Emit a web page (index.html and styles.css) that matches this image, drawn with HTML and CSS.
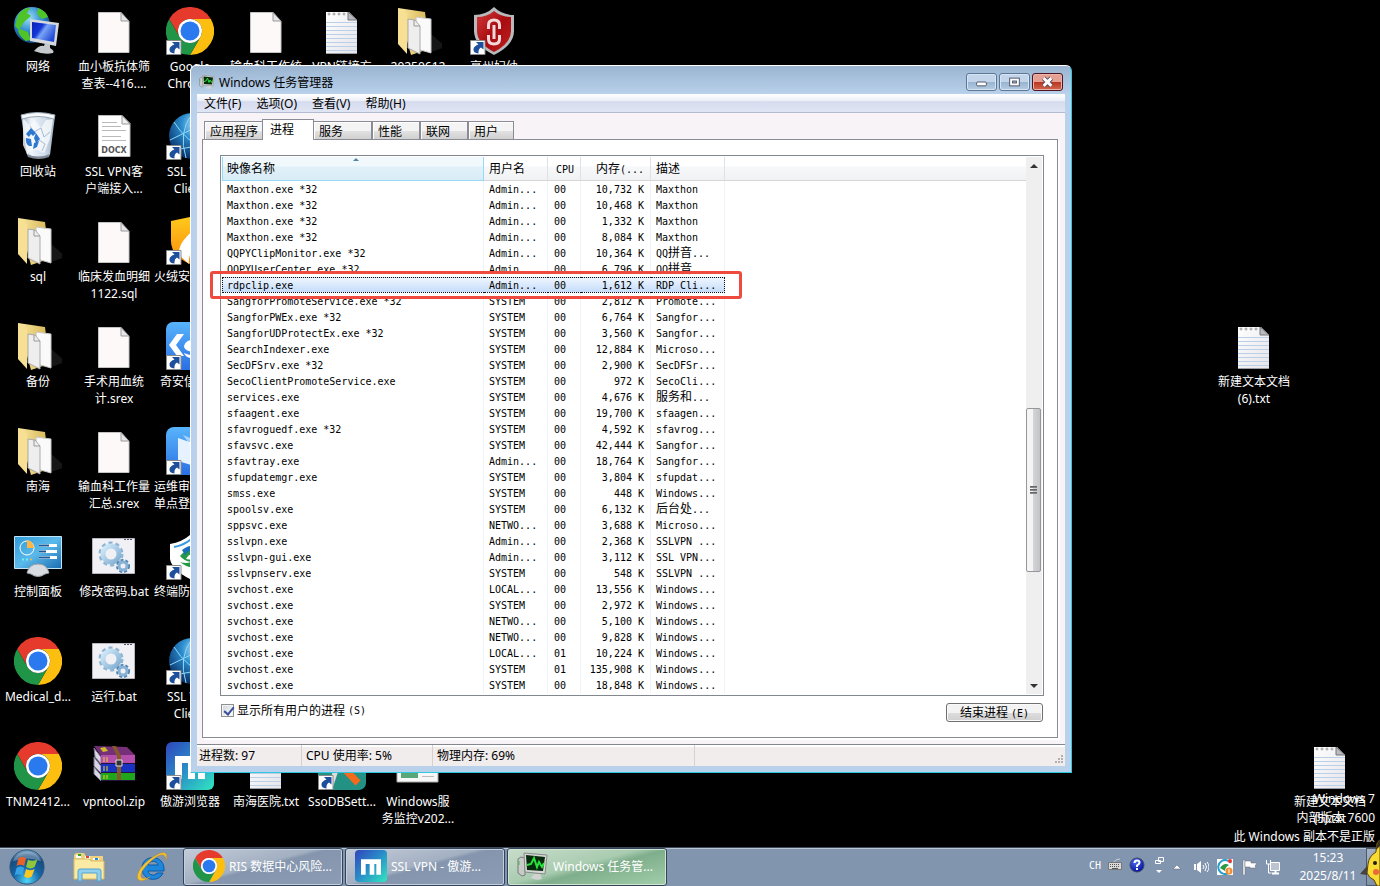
FILE: index.html
```html
<!DOCTYPE html>
<html lang="zh-CN">
<head>
<meta charset="utf-8">
<title>Windows 任务管理器</title>
<link rel="stylesheet" href="styles.css">
</head>
<body>
<svg class="defs" width="0" height="0" aria-hidden="true">
  <defs>
    <linearGradient id="gFolder" x1="0" x2="1"><stop offset="0" stop-color="#fbe9a0"/><stop offset="1" stop-color="#d9b95c"/></linearGradient>
    <linearGradient id="gPage" x1="0" y1="0" x2="1" y2="1"><stop offset="0" stop-color="#fff"/><stop offset="1" stop-color="#e4e4ea"/></linearGradient>
    <radialGradient id="gGlobe" cx=".4" cy=".3" r=".8"><stop offset="0" stop-color="#9be0fb"/><stop offset=".5" stop-color="#2b86c9"/><stop offset="1" stop-color="#062a66"/></radialGradient>
    <radialGradient id="gWorld" cx=".6" cy=".25" r=".8"><stop offset="0" stop-color="#c9ecfb"/><stop offset=".4" stop-color="#2c8ed0"/><stop offset="1" stop-color="#04265c"/></radialGradient>
    <linearGradient id="gScreen" x1="0" y1="0" x2="1" y2=".6"><stop offset="0" stop-color="#0a1fb4"/><stop offset=".4" stop-color="#1437d8"/><stop offset=".55" stop-color="#7aa4f5"/><stop offset="1" stop-color="#2049d6"/></linearGradient>
    <linearGradient id="gBin" x1="0" x2="1"><stop offset="0" stop-color="#9aabbd"/><stop offset=".3" stop-color="#eef4fa"/><stop offset=".7" stop-color="#cfdcea"/><stop offset="1" stop-color="#9dadbf"/></linearGradient>
    <linearGradient id="gBlue" x1="0" y1="0" x2="0" y2="1"><stop offset="0" stop-color="#58b4fb"/><stop offset="1" stop-color="#2a6fe4"/></linearGradient>
    <linearGradient id="gPanel" x1="0" y1="0" x2="1" y2="1"><stop offset="0" stop-color="#2f9bd8"/><stop offset=".5" stop-color="#5bb9ea"/><stop offset="1" stop-color="#1b6db0"/></linearGradient>
    <linearGradient id="gMax" x1="0" y1="0" x2="1" y2="1"><stop offset="0" stop-color="#2f45bd"/><stop offset=".5" stop-color="#2a8fc8"/><stop offset="1" stop-color="#30e8c0"/></linearGradient>
    <linearGradient id="gRed" x1="0" y1="0" x2="1" y2="1"><stop offset="0" stop-color="#d43a3a"/><stop offset=".5" stop-color="#a80c10"/><stop offset="1" stop-color="#c02020"/></linearGradient>
    <linearGradient id="gGear" x1="0" y1="0" x2="1" y2="1"><stop offset="0" stop-color="#d4ecf9"/><stop offset="1" stop-color="#7fadd2"/></linearGradient>
    <linearGradient id="gHuo" x1="0" y1="0" x2="0" y2="1"><stop offset="0" stop-color="#ffc91c"/><stop offset="1" stop-color="#fb8a0c"/></linearGradient>
    <radialGradient id="gOrb" cx=".5" cy=".9" r=".9"><stop offset="0" stop-color="#4fd4f8"/><stop offset=".45" stop-color="#1565a5"/><stop offset=".8" stop-color="#164a7c"/><stop offset="1" stop-color="#7fa9cc"/></radialGradient>
    <radialGradient id="gHelp" cx=".4" cy=".3" r=".7"><stop offset="0" stop-color="#4a6cf0"/><stop offset="1" stop-color="#0410a0"/></radialGradient>
  </defs>
  <symbol id="lnk" viewBox="0 0 48 48"><path d="M.5 33.500h14.500v14H.5z" fill="#fff" stroke="#8a8a8a"/><path d="M6 35h7.500v7.500L11 40.500Q8 42 8.500 46.500 3 46 3.500 42 4 39 8.500 37.500Z" fill="#1d4f9c"/></symbol>
  <symbol id="chrome" viewBox="0 0 48 48"><path d="M24 12H44.800A24 24 0 0 0 3.200 12L13.600 30A12 12 0 0 1 24 12" fill="#e53a2c"/><path d="M44.800 12A24 24 0 0 1 24 48L34.400 30A12 12 0 0 0 24 12Z" fill="#fcbf10"/><path d="M3.200 12A24 24 0 0 0 24 48L34.400 30A12 12 0 0 1 13.600 30Z" fill="#219547"/><circle cx="24" cy="24" r="12" fill="#fff"/><circle cx="24" cy="24" r="9.500" fill="#2a79ee"/></symbol>
  <symbol id="page" viewBox="0 0 48 48"><path d="M8.500 5.500H31l8 9V45.500H8.500Z" fill="#fdf9f9" stroke="#c4c4c4"/><path d="M31 5.500V14h8Z" fill="#e6e6ea" stroke="#9a9a9a"/></symbol>
  <symbol id="note" viewBox="0 0 48 48"><path d="M8 5h23l8 8v34H8Z" fill="url(#gPage)"/><path d="M8 46.500h31" stroke="#9c9ca4"/><path d="M8 15.500h31M8 19.500h31M8 23.500h31M8 27.500h31M8 31.500h31M8 35.500h31M8 39.500h31M8 43.500h31" stroke="#bccfe8"/><path d="M30 5v8h9Z" fill="#b8bac2" stroke="#777"/><g fill="#fff" stroke="#999"><circle cx="11" cy="7" r="1"/><circle cx="16" cy="7" r="1"/><circle cx="21" cy="7" r="1"/><circle cx="26" cy="7" r="1"/></g></symbol>
  <symbol id="folder" viewBox="0 0 48 48"><path d="M36 26l16 14-15 5Z" fill="#161616"/><path d="M4 1l27 4 1 8v30l-15 5Z" fill="url(#gFolder)"/><path d="M22 10l15 2v34l-14-4Z" fill="#fafafa" stroke="#c6c6c6"/><path d="M14 12l7 1 5 6v28l-12-6Z" fill="#eee" stroke="#aaa"/><path d="M20 13v6h6" fill="none" stroke="#999"/><path d="M4 1l9 6v40L4 37Z" fill="#f7e093"/></symbol>
  <symbol id="network" viewBox="0 0 48 48"><circle cx="18" cy="18" r="18" fill="url(#gGlobe)"/><path d="M4 8q6-8 12-7l-3 5 4 3-7 6-5 8-4-4ZM24 1q8 3 10 9l-6 2-5-5ZM6 22l8 3 3 8-5 1q-6-4-8-10Z" fill="#4fc428"/><path d="M16 12l29 4-3 23-26-5Z" fill="#d5d9df"/><path d="M18 15l24 3-2 17-22-4Z" fill="url(#gScreen)"/><path d="M20 44q5-6 10-5l1-3 5 1v4q5 3 3 5-9 2-19-2Z" fill="#c5c9ce"/></symbol>
  <symbol id="bin" viewBox="0 0 48 48"><path d="M7 4h34l-5 39q-11 5-23 0Z" fill="url(#gBin)"/><path d="M9 6l7 8 4-7 7 9 5-8 7-1-3 20-6 14-9-4-8 5-4-9Z" fill="#f7fafd" opacity=".8"/><path d="M16 14l4 6 7-4 3 9 6-5M25 28l6 4-3 7" fill="none" stroke="#a9bbcf"/><path d="M7 3q16-5 34 0l-1 4q-16-5-32 0Z" fill="#f7fafc" stroke="#9ba7b3"/><path d="M12 22l5-6 5 5-3 3-2-2-2 3ZM22 21l4 6-4 4-2-5ZM12 26l5 1 1 7h-3q-4-3-3-8ZM20 31l5-2-2 6-4 2Z" fill="#2f78cf"/><path d="M13 42q11 5 23 0l-1 3q-10 4-21 0Z" fill="#7f8a96"/></symbol>
  <symbol id="globe" viewBox="0 0 48 48"><circle cx="26" cy="24" r="23" fill="url(#gWorld)"/><path d="M4 28Q22 20 42 8M8 10Q20 30 42 38M26 2Q12 20 20 46M26 2Q44 20 32 46M6 36Q24 40 46 24" fill="none" stroke="#8fd9f8"/></symbol>
  <symbol id="huorong" viewBox="0 0 48 48"><path d="M5 4L24 0l19 4v20q0 15-19 23Q5 39 5 24Z" fill="url(#gHuo)"/><path d="M34 4C28 16 12 22 13 38l10 9c-2-16 16-22 11-43Z" fill="#fff"/></symbol>
  <symbol id="qax" viewBox="0 0 48 48"><rect width="48" height="48" rx="7" fill="url(#gBlue)"/><path d="M18 12h-7L3 23l8 11h7l-8-11ZM38 18q-18-3-20 6c0 6 10 5 13 8-3 3-10 0-13-1 3 9 22 6 21-1-1-6-12-5-14-8 3-3 9-1 12 0Z" fill="#fff"/></symbol>
  <symbol id="ops" viewBox="0 0 48 48"><rect width="48" height="48" rx="8" fill="url(#gBlue)"/><path d="M12 11l23 8v22L12 34Z" fill="#e6f2ff"/><path d="M17 8l20 8v20" fill="#fff" opacity=".5"/></symbol>
  <symbol id="edr" viewBox="0 0 48 48"><path d="M4 12q12-2 20-9 8 7 20 9v15q0 12-20 20Q6 38 4 27Z" fill="#fff"/><path d="M8 15q10-2 16-7 6 5 16 7" fill="none" stroke="#3d9be0" stroke-width="2"/><path d="M14 24q10-12 24-5-13-1-18 8 10 2 18 0-9 15-24 3 6 2 11 0-7-1-11-6Z" fill="#239847"/><path d="M16 18q9-7 20-3-12 1-17 8Z" fill="#1c6dba"/></symbol>
  <symbol id="control" viewBox="0 0 48 48"><path d="M.5 4.500h47v32H.5Z" fill="url(#gPanel)" stroke="#bfe4f7"/><circle cx="13" cy="16" r="7" fill="none" stroke="#fff"/><path d="M13 16V8a8 8 0 0 1 7 8Z" fill="#ffb545"/><path d="M25 13.500h18M25 19.500h18M25 25.500h18" stroke="#fff" stroke-width="3"/><path d="M25 13.500h10M25 19.500h7M25 25.500h11" stroke="#165c9d" stroke-width="2"/><path d="M8 27.500h6" stroke="#6ef0f5" stroke-width="2" stroke-dasharray="2 2"/><circle cx="17" cy="27.500" r="1" fill="#fb3"/><path d="M13 41q2-9 11-9t11 9l-4 1q-7 5-14 0Z" fill="#d9dce0" stroke="#9aa1a8"/></symbol>
  <symbol id="bat" viewBox="0 0 48 48"><path d="M2.500 6.500h42v35h-42Z" fill="#f0f0f5" stroke="#b5b6be"/><path d="M34 7.500h9" stroke="#556" stroke-dasharray="2 1"/><circle cx="21" cy="22" r="11" fill="none" stroke="#8db6d6" stroke-width="3" stroke-dasharray="4 3"/><circle cx="21" cy="22" r="8" fill="none" stroke="url(#gGear)" stroke-width="5"/><circle cx="33" cy="34" r="6" fill="none" stroke="#4c7fae" stroke-width="2" stroke-dasharray="3 2"/><circle cx="33" cy="34" r="4" fill="none" stroke="#87b2d6" stroke-width="3"/></symbol>
  <symbol id="rar" viewBox="0 0 48 48"><path d="M4 6l7 9v7l-6-7ZM4 15l7 9v7l-7-7ZM4 25l7 8v6l-7-7Z" fill="#d9d4e4" stroke="#7b7390"/><path d="M4 4l33 1 8 8-34 1Z" fill="#753078"/><path d="M11 13h34v8H11Z" fill="#b44fae"/><path d="M11 22h34v8H11Z" fill="#1733c0"/><path d="M11 31h34v7H11Z" fill="#20a51d"/><path d="M11 21.500h34M11 30.500h34M11 38.500h34" stroke="#24133a"/><path d="M14 15v5M17 15v5M14 24v5M17 24v5M14 33v4M17 33v4" stroke="#ead52c"/><path d="M10 6l5-1 3 4-5 1Z" fill="#cdbb2a"/><path d="M22 4h4l5 10v24h-4V14Z" fill="#85592a"/><path d="M26 18h6v6h-6Z" fill="#333" stroke="#ddd"/></symbol>
  <symbol id="maxthon" viewBox="0 0 48 48"><rect width="48" height="48" rx="6" fill="url(#gMax)"/><path d="M9 37V14h30v23h-7V21h-3v16h-7V21h-6v16Z" fill="#fff"/></symbol>
  <symbol id="shield" viewBox="0 0 48 48"><path d="M4 8q12 0 20-8 8 8 20 8v16q0 14-20 24Q4 38 4 24Z" fill="#b7babd"/><path d="M7 10q10 0 17-6 7 6 17 6v14q0 12-17 21Q7 36 7 24Z" fill="url(#gRed)"/><path d="M19 23v-6q0-5 5-5t5 5v6M19 27v12q0 5 5 5" fill="none"/><path d="M18.500 22v-4q0-5 5.500-5t5.500 5v4M18.500 28v4q0 5 5.500 5t5.500-5v-4M24 18v14" fill="none" stroke="#f3dada" stroke-width="3"/></symbol>
  <symbol id="tools" viewBox="0 0 48 48"><rect width="48" height="48" rx="7" fill="#239184"/><path d="M22 16L12 46" stroke="#ddd" stroke-width="5"/><path d="M22 22l18 19" stroke="#f46a1b" stroke-width="7"/></symbol>
  <symbol id="service" viewBox="0 0 48 48"><path d="M3 8h41v32H3Z" fill="#f7f7f7" stroke="#aaa"/><path d="M7 12h17v24H7Z" fill="#57a777"/><path d="M28 34.500h12M28 30.500h12" stroke="#bbb"/></symbol>
  <symbol id="taskmgr" viewBox="0 0 32 32"><path d="M1 9l3-2 4 1v17l-3 1-4-3Z" fill="#c8ccc8" stroke="#777"/><path d="M2 11v4" stroke="#4b4"/><path d="M7 3l23 2-2 19-20-2Z" fill="#d5d8d5" stroke="#888"/><path d="M9 5l19 2-2 14-16-1Z" fill="#062a0b"/><path d="M10 15l4-1 3-6 3 9 2-5 3 5 2-4" fill="none" stroke="#28e33c" stroke-width="2"/><path d="M14 28l3-4h6l2 5q-6 2-11-1Z" fill="#d0d3d0"/></symbol>
  <symbol id="orb" viewBox="0 0 40 40"><circle cx="20" cy="20" r="18" fill="url(#gOrb)" stroke="#31577c"/><path d="M5 14a16 16 0 0 1 30 0q-14-6-30 0" fill="#fff" opacity=".3"/><path d="M11 11q4-3 8 0l-2 8q-4-3-8 0Z" fill="#e9622a"/><path d="M21 12q4 3 10 0l-3 8q-4 3-9 0Z" fill="#8fc63b"/><path d="M9 21q4-3 8 0l-2 8q-4-3-8 0Z" fill="#35a3e4"/><path d="M19 22q4 3 9 0l-3 8q-4 3-8 0Z" fill="#fbc721"/></symbol>
  <symbol id="explorer" viewBox="0 0 32 32"><path d="M1 4l2-2h8l2 3h17v22H1Z" fill="#ecd27e"/><path d="M3 4h5v3H3ZM12 5h5v3h-5ZM20 7h6v2h-6Z" fill="#fff"/><path d="M5 3h3v2H5Z" fill="#2ca42c"/><path d="M13 5h3v2h-3Z" fill="#dc4334"/><path d="M22 7h3v2h-3Z" fill="#2d83d5"/><path d="M1 8h15l2 2h13v18H1Z" fill="#fbeaa4" stroke="#d9ba62"/><path d="M5 30V20q0-2 2-2h19q2 0 2 2v10h-4v-8H9v8Z" fill="#8fd0ee" stroke="#56a3cc"/></symbol>
  <symbol id="ie" viewBox="0 0 32 32"><path d="M28 20H12c1 5 7 5 9 2h6c-4 10-21 8-21-5C6 3 28 3 28 18ZM12 14h10c-1-5-9-5-10 0" fill="#1d87dc" stroke="#0a5aa8"/><path d="M30 9c3-9-4-9-11-4C10 9-3 24 3 29c3 2 8-1 11-3-5 2-8 2-9 0-2-5 8-15 14-19 5-4 11-5 11 2" fill="#f7c331" stroke="#c98f14" stroke-width=".5"/></symbol>
  <symbol id="keyboard" viewBox="0 0 16 16"><path d="M7 5q1-3 6-3" fill="none" stroke="#ccc"/><path d="M1.500 5.500h13v7h-13Z" fill="#d8d8d8" stroke="#777"/><path d="M3 7.500h10M3 9.500h10" stroke="#555" stroke-dasharray="1 1"/><path d="M5 11.500h6" stroke="#555"/></symbol>
  <symbol id="help" viewBox="0 0 16 16"><circle cx="8" cy="8" r="7" fill="url(#gHelp)" stroke="#3d4a6c"/><path d="M5.500 6q0-2.500 2.500-2.500t2.500 2.300Q10.500 7 8 8.500V10M8 11v2" fill="none" stroke="#fff" stroke-width="2"/></symbol>
  <symbol id="restore" viewBox="0 0 16 20"><path d="M7.500 2.500h5v4h-5ZM4.500 5.500h5v3h-5Z" fill="#8295ae" stroke="#fff"/><path d="M5 15h6l-3 3Z" fill="#fff"/></symbol>
  <symbol id="up" viewBox="0 0 16 16"><path d="M4 10l4-4 4 4Z" fill="#fff" stroke="#56667c" stroke-width=".5"/></symbol>
  <symbol id="speaker" viewBox="0 0 16 16"><path d="M1 5h2v6H1ZM4 5l4-3v12l-4-3Z" fill="#fff"/><path d="M10 6q2 2 0 4M12 4q3 4 0 8M14 3q4 5 0 10" fill="none" stroke="#fff"/></symbol>
  <symbol id="av" viewBox="0 0 16 16"><rect width="16" height="16" fill="#fff"/><path d="M14 4A7 7 0 1 0 12 14" fill="none" stroke="#279ec4" stroke-width="2"/><path d="M3 9q4-6 9-3-4 2-4 6Z" fill="#2a9a45"/><circle cx="13" cy="2" r="2" fill="#e33"/><circle cx="12" cy="12" r="3.500" fill="#f38d31"/><path d="M12 10v4" stroke="#fff"/></symbol>
  <symbol id="flag" viewBox="0 0 16 16"><path d="M2 1h2v15H2Z" fill="#fff" stroke="#667" stroke-width=".5"/><path d="M4 2h6v2h6l-2 3 1 2H9V8H4Z" fill="#fff" stroke="#667" stroke-width=".5"/></symbol>
  <symbol id="lan" viewBox="0 0 16 16"><path d="M5.500 3.500h9v8h-9Z" fill="#bcc5cf" stroke="#fff"/><path d="M7 14.500h7M10.500 12v2" stroke="#fff" stroke-width="2"/><path d="M1.500 1v4h4V1M3.500 5v9h3" fill="none" stroke="#fff"/></symbol>
  <symbol id="pika" viewBox="0 0 20 48"><path d="M20 2q-4 1-4 12-7 4-8 12l-1 9q2 5 7 7l3 6h3Z" fill="#f8dc32" stroke="#59430b"/><path d="M0 36l7-8v9Z" fill="#444"/><path d="M20 2q-3 1-4 10l4-4Z" fill="#38301c"/><circle cx="16" cy="34" r="3" fill="#ed6937"/><circle cx="15" cy="25" r="2" fill="#241a11"/></symbol>
</svg>

<main class="desktop">
  <div class="icons">
    <div class="icon-col">
      <a class="icon" href="#"><svg><use href="#network"/></svg><span>网络</span></a>
      <a class="icon" href="#"><svg><use href="#bin"/></svg><span>回收站</span></a>
      <a class="icon" href="#"><svg><use href="#folder"/></svg><span>sql</span></a>
      <a class="icon" href="#"><svg><use href="#folder"/></svg><span>备份</span></a>
      <a class="icon" href="#"><svg><use href="#folder"/></svg><span>南海</span></a>
      <a class="icon" href="#"><svg><use href="#control"/></svg><span>控制面板</span></a>
      <a class="icon" href="#"><svg><use href="#chrome"/></svg><span>Medical_d...</span></a>
      <a class="icon" href="#"><svg><use href="#chrome"/></svg><span>TNM2412...</span></a>
    </div>
    <div class="icon-col">
      <a class="icon" href="#"><svg><use href="#page"/></svg><span>血小板抗体筛<br>查表--416....</span></a>
      <a class="icon" href="#"><svg viewBox="0 0 48 48"><path d="M8.500 3.500H32l8 8V44.500H8.500Z" fill="#fff" stroke="#bbb"/><path d="M32 3.500V12h8Z" fill="#eee" stroke="#999"/><path d="M12 10.500h15M12 14.500h19M12 18.500h24M12 24.500h19M12 28.500h24" stroke="#b9b9b9"/><text class="doc-type" x="24" y="41" text-anchor="middle">DOCX</text></svg><span>SSL VPN客<br>户端接入...</span></a>
      <a class="icon" href="#"><svg><use href="#page"/></svg><span>临床发血明细<br>1122.sql</span></a>
      <a class="icon" href="#"><svg><use href="#page"/></svg><span>手术用血统<br>计.srex</span></a>
      <a class="icon" href="#"><svg><use href="#page"/></svg><span>输血科工作量<br>汇总.srex</span></a>
      <a class="icon" href="#"><svg><use href="#bat"/></svg><span>修改密码.bat</span></a>
      <a class="icon" href="#"><svg><use href="#bat"/></svg><span>运行.bat</span></a>
      <a class="icon" href="#"><svg><use href="#rar"/></svg><span>vpntool.zip</span></a>
    </div>
    <div class="icon-col">
      <a class="icon" href="#"><svg><use href="#chrome"/><use href="#lnk"/></svg><span>Google<br>Chrome</span></a>
      <a class="icon" href="#"><svg><use href="#globe"/><use href="#lnk"/></svg><span>SSL VPN<br>Client</span></a>
      <a class="icon" href="#"><svg><use href="#huorong"/><use href="#lnk"/></svg><span>火绒安全软件</span></a>
      <a class="icon" href="#"><svg><use href="#qax"/><use href="#lnk"/></svg><span>奇安信天擎</span></a>
      <a class="icon" href="#"><svg><use href="#ops"/><use href="#lnk"/></svg><span>运维审计系统<br>单点登录工具</span></a>
      <a class="icon" href="#"><svg><use href="#edr"/><use href="#lnk"/></svg><span>终端防护中心</span></a>
      <a class="icon" href="#"><svg><use href="#globe"/><use href="#lnk"/></svg><span>SSL VPN<br>Client</span></a>
      <a class="icon" href="#"><svg><use href="#maxthon"/><use href="#lnk"/></svg><span>傲游浏览器</span></a>
    </div>
    <div class="icon-col">
      <a class="icon" href="#"><svg><use href="#page"/></svg><span>输血科工作统</span></a>
      <a class="icon" href="#"><svg><use href="#note"/></svg><span>南海医院.txt</span></a>
    </div>
    <div class="icon-col">
      <a class="icon" href="#"><svg><use href="#note"/></svg><span>VPN链接方</span></a>
      <a class="icon" href="#"><svg><use href="#tools"/><use href="#lnk"/></svg><span>SsoDBSett...</span></a>
    </div>
    <div class="icon-col">
      <a class="icon" href="#"><svg><use href="#folder"/></svg><span>20250612</span></a>
      <a class="icon" href="#"><svg><use href="#service"/></svg><span>Windows服<br>务监控v202...</span></a>
    </div>
    <div class="icon-col">
      <a class="icon" href="#"><svg><use href="#shield"/><use href="#lnk"/></svg><span>亳州妇幼</span></a>
    </div>
  </div>

  <p class="watermark">Windows 7<br>内部版本 7600<br>此 Windows 副本不是正版</p>
  <a class="icon loose-upper" href="#"><svg><use href="#note"/></svg><span>新建文本文档<br>(6).txt</span></a>
  <a class="icon loose-lower" href="#"><svg><use href="#note"/></svg><span>新建文本文档<br>(5).txt</span></a>

  <section class="window">
    <header class="titlebar">
      <svg class="title-icon"><use href="#taskmgr"/></svg>
      <h1>Windows 任务管理器</h1>
      <div class="controls">
        <button aria-label="最小化"><svg viewBox="0 0 30 16"><rect x="10" y="8" width="10" height="4" rx="1" fill="#fff" stroke="#4d5566"/></svg></button>
        <button aria-label="最大化"><svg viewBox="0 0 30 16"><rect x="10" y="4" width="10" height="8" fill="#fff" stroke="#4d5566"/><rect x="13" y="7" width="4" height="2" fill="#a9c0da" stroke="#4d5566"/></svg></button>
        <button class="close" aria-label="关闭"><svg viewBox="0 0 30 16"><path d="M11 4l8 8M19 4l-8 8" stroke="#4d4455" stroke-width="5"/><path d="M11 4l8 8M19 4l-8 8" stroke="#fff" stroke-width="3"/></svg></button>
      </div>
    </header>
    <div class="client">
      <nav class="menu"><button>文件(F)</button><button>选项(O)</button><button>查看(V)</button><button>帮助(H)</button></nav>
      <div class="body">
        <div class="tabs" role="tablist">
          <button role="tab" class="tab-l">应用程序</button><button role="tab" class="active" aria-selected="true">进程</button><button role="tab" class="tab-l">服务</button><button role="tab" class="tab-m">性能</button><button role="tab" class="tab-m">联网</button><button role="tab" class="tab-s">用户</button>
        </div>
        <div class="panel">
          <div class="list">
            <div class="rows">
              <table>
                <colgroup><col class="c-name"><col class="c-user"><col class="c-cpu"><col class="c-mem"><col class="c-desc"><col></colgroup>
                <thead><tr><th class="sorted">映像名称</th><th>用户名</th><th class="r"><small>CPU</small></th><th class="r">内存<small>(...</small></th><th>描述</th><th></th></tr></thead>
                <tbody>
                  <tr><td>Maxthon.exe *32</td><td>Admin...</td><td>00</td><td>10,732 K</td><td>Maxthon</td><td></td></tr>
                  <tr><td>Maxthon.exe *32</td><td>Admin...</td><td>00</td><td>10,468 K</td><td>Maxthon</td><td></td></tr>
                  <tr><td>Maxthon.exe *32</td><td>Admin...</td><td>00</td><td>1,332 K</td><td>Maxthon</td><td></td></tr>
                  <tr><td>Maxthon.exe *32</td><td>Admin...</td><td>00</td><td>8,084 K</td><td>Maxthon</td><td></td></tr>
                  <tr><td>QQPYClipMonitor.exe *32</td><td>Admin...</td><td>00</td><td>10,364 K</td><td>QQ<b>拼音</b>...</td><td></td></tr>
                  <tr><td>QQPYUserCenter.exe *32</td><td>Admin...</td><td>00</td><td>6,796 K</td><td>QQ<b>拼音</b>...</td><td></td></tr>
                  <tr class="selected"><td>rdpclip.exe</td><td>Admin...</td><td>00</td><td>1,612 K</td><td>RDP Cli...</td><td></td></tr>
                  <tr><td>SangforPromoteService.exe *32</td><td>SYSTEM</td><td>00</td><td>2,812 K</td><td>Promote...</td><td></td></tr>
                  <tr><td>SangforPWEx.exe *32</td><td>SYSTEM</td><td>00</td><td>6,764 K</td><td>Sangfor...</td><td></td></tr>
                  <tr><td>SangforUDProtectEx.exe *32</td><td>SYSTEM</td><td>00</td><td>3,560 K</td><td>Sangfor...</td><td></td></tr>
                  <tr><td>SearchIndexer.exe</td><td>SYSTEM</td><td>00</td><td>12,884 K</td><td>Microso...</td><td></td></tr>
                  <tr><td>SecDFSrv.exe *32</td><td>SYSTEM</td><td>00</td><td>2,900 K</td><td>SecDFSr...</td><td></td></tr>
                  <tr><td>SecoClientPromoteService.exe</td><td>SYSTEM</td><td>00</td><td>972 K</td><td>SecoCli...</td><td></td></tr>
                  <tr><td>services.exe</td><td>SYSTEM</td><td>00</td><td>4,676 K</td><td><b>服务和</b>...</td><td></td></tr>
                  <tr><td>sfaagent.exe</td><td>SYSTEM</td><td>00</td><td>19,700 K</td><td>sfaagen...</td><td></td></tr>
                  <tr><td>sfavroguedf.exe *32</td><td>SYSTEM</td><td>00</td><td>4,592 K</td><td>sfavrog...</td><td></td></tr>
                  <tr><td>sfavsvc.exe</td><td>SYSTEM</td><td>00</td><td>42,444 K</td><td>Sangfor...</td><td></td></tr>
                  <tr><td>sfavtray.exe</td><td>Admin...</td><td>00</td><td>18,764 K</td><td>Sangfor...</td><td></td></tr>
                  <tr><td>sfupdatemgr.exe</td><td>SYSTEM</td><td>00</td><td>3,804 K</td><td>sfupdat...</td><td></td></tr>
                  <tr><td>smss.exe</td><td>SYSTEM</td><td>00</td><td>448 K</td><td>Windows...</td><td></td></tr>
                  <tr><td>spoolsv.exe</td><td>SYSTEM</td><td>00</td><td>6,132 K</td><td><b>后台处</b>...</td><td></td></tr>
                  <tr><td>sppsvc.exe</td><td>NETWO...</td><td>00</td><td>3,688 K</td><td>Microso...</td><td></td></tr>
                  <tr><td>sslvpn.exe</td><td>Admin...</td><td>00</td><td>2,368 K</td><td>SSLVPN ...</td><td></td></tr>
                  <tr><td>sslvpn-gui.exe</td><td>Admin...</td><td>00</td><td>3,112 K</td><td>SSL VPN...</td><td></td></tr>
                  <tr><td>sslvpnserv.exe</td><td>SYSTEM</td><td>00</td><td>548 K</td><td>SSLVPN ...</td><td></td></tr>
                  <tr><td>svchost.exe</td><td>LOCAL...</td><td>00</td><td>13,556 K</td><td>Windows...</td><td></td></tr>
                  <tr><td>svchost.exe</td><td>SYSTEM</td><td>00</td><td>2,972 K</td><td>Windows...</td><td></td></tr>
                  <tr><td>svchost.exe</td><td>NETWO...</td><td>00</td><td>5,100 K</td><td>Windows...</td><td></td></tr>
                  <tr><td>svchost.exe</td><td>NETWO...</td><td>00</td><td>9,828 K</td><td>Windows...</td><td></td></tr>
                  <tr><td>svchost.exe</td><td>LOCAL...</td><td>01</td><td>10,224 K</td><td>Windows...</td><td></td></tr>
                  <tr><td>svchost.exe</td><td>SYSTEM</td><td>01</td><td>135,908 K</td><td>Windows...</td><td></td></tr>
                  <tr><td>svchost.exe</td><td>SYSTEM</td><td>00</td><td>18,848 K</td><td>Windows...</td><td></td></tr>
                </tbody>
              </table>
            </div>
            <div class="scrollbar" aria-hidden="true">
              <i class="arrow arrow-up"></i>
              <i class="space-before"></i>
              <i class="thumb"><i></i><i></i><i></i></i>
              <i class="space-after"></i>
              <i class="arrow arrow-down"></i>
            </div>
          </div>
          <div class="actions">
            <label><input type="checkbox" checked>显示所有用户的进程<small>(S)</small></label>
            <button>结束进程<small>(E)</small></button>
          </div>
        </div>
      </div>
      <footer class="status"><span class="s-count">进程数: 97</span><span class="s-cpu">CPU 使用率: 5%</span><span class="s-mem">物理内存: 69%</span><svg class="grip" viewBox="0 0 10 10"><path d="M7 1h2M7 4h2M7 7h2M4 4h2M4 7h2M1 7h2" stroke="#b5b0b0" stroke-width="2"/></svg></footer>
    </div>
  </section>
  <div class="highlight"></div>
</main>

<footer class="taskbar">
  <button class="start" aria-label="开始"><svg><use href="#orb"/></svg></button>
  <button class="pin" aria-label="资源管理器"><svg><use href="#explorer"/></svg></button>
  <button class="pin" aria-label="Internet Explorer"><svg><use href="#ie"/></svg></button>
  <div class="tasks">
    <button><svg><use href="#chrome"/></svg>RIS 数据中心风险...</button>
    <button><svg><use href="#maxthon"/></svg>SSL VPN - 傲游...</button>
    <button class="current"><svg><use href="#taskmgr"/></svg>Windows 任务管...</button>
  </div>
  <div class="lang"><small>CH</small><svg><use href="#keyboard"/></svg><svg><use href="#help"/></svg><svg class="tall"><use href="#restore"/></svg></div>
  <div class="tray"><svg><use href="#up"/></svg><svg><use href="#speaker"/></svg><svg><use href="#av"/></svg><svg><use href="#flag"/></svg><svg><use href="#lan"/></svg></div>
  <div class="clock">15:23<br>2025/8/11</div>
  <button class="show-desktop" aria-label="显示桌面"></button>
  <svg class="pet"><use href="#pika"/></svg>
</footer>
</body>
</html>
```

FILE: styles.css
```css
* { box-sizing: border-box; }
html, body { height: 100%; }
body {
  margin: 0;
  display: flex;
  flex-direction: column;
  background: #000;
  overflow: hidden;
  font: 12px/17px "Noto Sans", "Noto Sans CJK SC", sans-serif;
  color: #000;
}
.defs { position: absolute; }
button { font: inherit; color: inherit; padding: 0; border: 0; background: none; }
small { font: 10px "DejaVu Sans Mono", monospace; }

/* Desktop */
.desktop { position: relative; flex: 1; min-height: 0; margin-bottom: -1px; }
.icons { display: flex; padding-top: 7px; }
.icon-col { display: flex; flex-direction: column; justify-content: space-between; width: 76px; }
.icon {
  display: flex;
  flex-direction: column;
  align-items: center;
  gap: 3px;
  width: 76px;
  height: 105px;
  color: #fff;
  text-align: center;
  text-decoration: none;
  white-space: nowrap;
}
.icon svg { width: 48px; height: 48px; flex: none; overflow: visible; }
.doc-type { font: 700 8px "DejaVu Sans", sans-serif; fill: #555; }
.loose-upper { position: absolute; right: 88px; top: 322px; }
.loose-lower { position: absolute; right: 12px; bottom: 1px; }
.watermark {
  position: absolute;
  right: 5px;
  bottom: 2px;
  margin: 0;
  color: #fff;
  text-align: right;
  line-height: 19px;
}

/* Window frame */
.window {
  position: absolute;
  inset: 65px 308px 75px 190px;
  display: flex;
  flex-direction: column;
  padding: 0 6px 6px;
  border: 1px solid #fff;
  border-right-color: #2fc8e0;
  border-bottom-color: #2fc8e0;
  border-radius: 6px 6px 0 0;
  background: linear-gradient(#9ab4d1, #b9d1ea 28px);
}
.titlebar { display: flex; align-items: center; height: 28px; flex: none; padding-left: 2px; }
.title-icon { width: 16px; height: 16px; margin: 4px 4px 0 0; }
h1 { flex: 1; margin: 5px 0 0; font-size: 12px; font-weight: 400; line-height: 17px; }
.controls { display: flex; gap: 2px; padding: 4px 2px 0 0; }
.controls button {
  width: 31px;
  height: 18px;
  border: 1px solid #5d7795;
  border-radius: 3px;
  background: linear-gradient(#c3d5ea 50%, #98b3cf 50%, #b5cde4);
  box-shadow: inset 0 0 0 1px #d6e5f4;
}
.controls .close {
  border-color: #4e1422;
  background: linear-gradient(#e5a093 50%, #b93420 50%, #d2674e);
  box-shadow: inset 0 0 0 1px #eab5a8;
}
.controls svg { display: block; width: 29px; height: 16px; }
.client { display: flex; flex: 1; flex-direction: column; min-height: 0; background: #f7f3f7; }
.menu {
  display: flex;
  gap: 15px;
  height: 19px;
  flex: none;
  padding-left: 7px;
  border-bottom: 1px solid #b3bbd1;
  background: linear-gradient(#fff, #eaeef7 40%, #d6dcee 42%, #e0e5f4);
}

/* Tabs and panel */
.body { display: flex; flex: 1; flex-direction: column; min-height: 0; padding: 6px 7px 6px 5px; }
.tabs { display: flex; align-items: flex-end; height: 20px; padding-left: 2px; }
.tabs button {
  height: 18px;
  padding: 1px 0 0 5px;
  border: 1px solid #898c95;
  border-width: 1px 1px 0 1px;
  background: linear-gradient(#f4f4f4 50%, #e3e3e3 50%, #d0d0d0);
  box-shadow: inset 1px 1px 0 #fff;
  text-align: left;
}
.tabs .tab-l { width: 59px; }
.tabs .tab-m { width: 48px; }
.tabs .tab-s { width: 46px; }
.tabs .active {
  z-index: 1;
  width: 52px;
  height: 21px;
  margin: 0 -1px -1px;
  padding: 0 0 1px 7px;
  background: #fff;
}
.panel {
  display: flex;
  flex: 1;
  flex-direction: column;
  min-height: 0;
  padding: 15px 13px 0 17px;
  border: 1px solid #898c95;
  background: #fff;
  box-shadow: 2px 2px 0 #fff;
}

/* Process list */
.list { display: flex; flex: 1; min-height: 0; padding: 1px; border: 1px solid #828790; }
.rows { flex: 1; min-width: 0; overflow: hidden; background: #fff; }
table { width: 100%; border-collapse: separate; border-spacing: 0; table-layout: fixed; }
.c-name { width: 262px; }
.c-user { width: 64px; }
.c-cpu { width: 33px; }
.c-mem { width: 70px; }
.c-desc { width: 74px; }
th {
  position: relative;
  height: 24px;
  padding: 1px 5px 0;
  border-right: 1px solid #dfe1e5;
  border-bottom: 1px solid #d5d5d5;
  background: linear-gradient(#fff 40%, #f7f8fa 42%, #f1f2f4);
  font-weight: 400;
  line-height: 16px;
  text-align: left;
  white-space: nowrap;
}
th.r { padding-right: 6px; text-align: right; }
th.sorted {
  border: 1px solid #96d9f9;
  border-top: 0;
  background: linear-gradient(#f2f9fc 40%, #e1f1f9 42%, #d8ecf6);
  padding-left: 4px;
}
th.sorted::after {
  content: "";
  position: absolute;
  top: 1px;
  left: 50%;
  border: 3px solid transparent;
  border-top: 0;
  border-bottom-color: #4d86a8;
}
th:last-child, td:last-child { border-right: 0; }
td {
  height: 16px;
  padding: 2px 5px 0;
  border-right: 1px solid #edf3fb;
  font: 10px/14px "DejaVu Sans Mono", "Noto Sans CJK SC", monospace;
  white-space: nowrap;
}
td:nth-child(3) { padding-left: 6px; }
td:nth-child(4) { padding-right: 6px; text-align: right; }
td b { font-size: 12px; font-weight: 400; line-height: 12px; }
.selected td:not(:last-child) {
  padding-top: 1px;
  border: 1px dotted #111;
  border-width: 1px 0;
  background: linear-gradient(#eff6fe, #c4dcfb);
  line-height: 13px;
}
.selected td:nth-child(1) { border-left-width: 1px; padding-left: 4px; }
.selected td:nth-child(4) { padding-right: 7px; }
.selected td:nth-child(5) { border-right-width: 1px; }
.highlight {
  position: absolute;
  left: 210px;
  top: 271px;
  width: 532px;
  height: 28px;
  border: 3px solid #ee4a3e;
  border-radius: 3px;
}

/* Scroll bar */
.scrollbar { display: flex; flex-direction: column; width: 16px; flex: none; background: #efefef; }
.arrow { display: grid; place-items: center; height: 17px; }
.arrow::after { content: ""; border: 4px solid transparent; }
.arrow-up::after { border-top: 0; border-bottom-color: #333; }
.arrow-down::after { border-bottom: 0; border-top-color: #333; }
.space-before { flex: 234; }
.space-after { flex: 105; }
.thumb {
  display: flex;
  flex: 163;
  flex-direction: column;
  align-items: center;
  justify-content: center;
  gap: 1px;
  margin-right: 1px;
  border: 1px solid #979797;
  border-radius: 2px;
  background: linear-gradient(90deg, #f5f5f5 45%, #d3d4d7 50%, #c3c4c8);
}
.thumb i { width: 7px; height: 2px; background: linear-gradient(#555, #999); }

/* Panel actions */
.actions { display: flex; align-items: flex-start; justify-content: space-between; padding: 7px 1px 15px 0; }
.actions label { display: flex; align-items: center; gap: 3px; height: 14px; padding-left: 1px; }
.actions input {
  appearance: none;
  position: relative;
  width: 13px;
  height: 13px;
  margin: 0;
  border: 1px solid #8e8f8f;
  background: linear-gradient(135deg, #cfd5dc, #fff);
  box-shadow: inset 0 0 0 1px #f4f4f4;
}
.actions input:checked::after {
  content: "";
  position: absolute;
  left: 4px;
  top: 0;
  width: 4px;
  height: 8px;
  border: solid #3b4f9a;
  border-width: 0 2px 2px 0;
  transform: rotate(40deg);
}
.actions button {
  width: 97px;
  height: 19px;
  border: 1px solid #707070;
  border-radius: 3px;
  background: linear-gradient(#f3f3f3 50%, #dedede 50%, #cfcfcf);
  box-shadow: inset 0 0 0 1px #fafafa;
  line-height: 16px;
}
.actions button small { margin-left: 3px; }

/* Status bar */
.status {
  display: flex;
  height: 22px;
  flex: none;
  border-top: 1px solid #85878f;
  background: #f1edec;
  box-shadow: inset 0 2px 0 #fff;
  line-height: 21px;
}
.status span { padding-left: 4px; border-right: 1px solid #d5d1d1; }
.status .s-count { width: 105px; padding-left: 2px; }
.status .s-cpu { width: 131px; }
.status .s-mem { width: 262px; }
.grip { width: 10px; height: 10px; margin: auto 1px 1px auto; }

/* Taskbar */
.taskbar {
  position: relative;
  display: flex;
  align-items: center;
  height: 39px;
  flex: none;
  border-top: 1px solid #3c4858;
  background: #8295ae;
  box-shadow: inset 0 1px 0 #b9c6d5;
  color: #fff;
}
.start { width: 54px; height: 38px; }
.start svg { width: 40px; height: 38px; }
.pin { width: 63px; height: 38px; padding-left: 6px; }
.pin svg { width: 32px; height: 32px; }
.pin svg, .start svg { display: block; margin: auto; }
.tasks { display: flex; gap: 2px; align-self: stretch; padding-left: 3px; }
.tasks button {
  display: flex;
  align-items: center;
  gap: 4px;
  width: 160px;
  padding: 0 0 2px 9px;
  border: 1px solid #34435a;
  border-radius: 3px;
  background: linear-gradient(165deg, #c3cbd8, #a3b0c2 45%, #8495ad 50%, #8b9cb4);
  box-shadow: inset 0 0 0 1px #c4cfdd;
  white-space: nowrap;
}
.tasks .current {
  background: linear-gradient(165deg, #c8dccb, #a9ccb0 45%, #7fae8c 55%, #a2cfaa);
  box-shadow: inset 0 0 0 1px #cfe5d2;
}
.tasks svg { width: 32px; height: 32px; }
.lang { display: flex; align-items: center; gap: 6px; margin-left: auto; padding-bottom: 4px; }
.lang svg, .tray svg { width: 16px; height: 16px; }
.lang .tall { height: 20px; }
.tray { display: flex; align-items: center; gap: 8px; padding: 0 16px 0 2px; }
.clock { width: 62px; text-align: center; line-height: 18px; }
.show-desktop {
  align-self: stretch;
  width: 14px;
  margin-left: 7px;
  border: 1px solid #4a5970;
  background: linear-gradient(135deg, #a9b5c5, #76879f);
}
.pet { position: absolute; right: 0; bottom: 0; width: 20px; height: 48px; }
```
